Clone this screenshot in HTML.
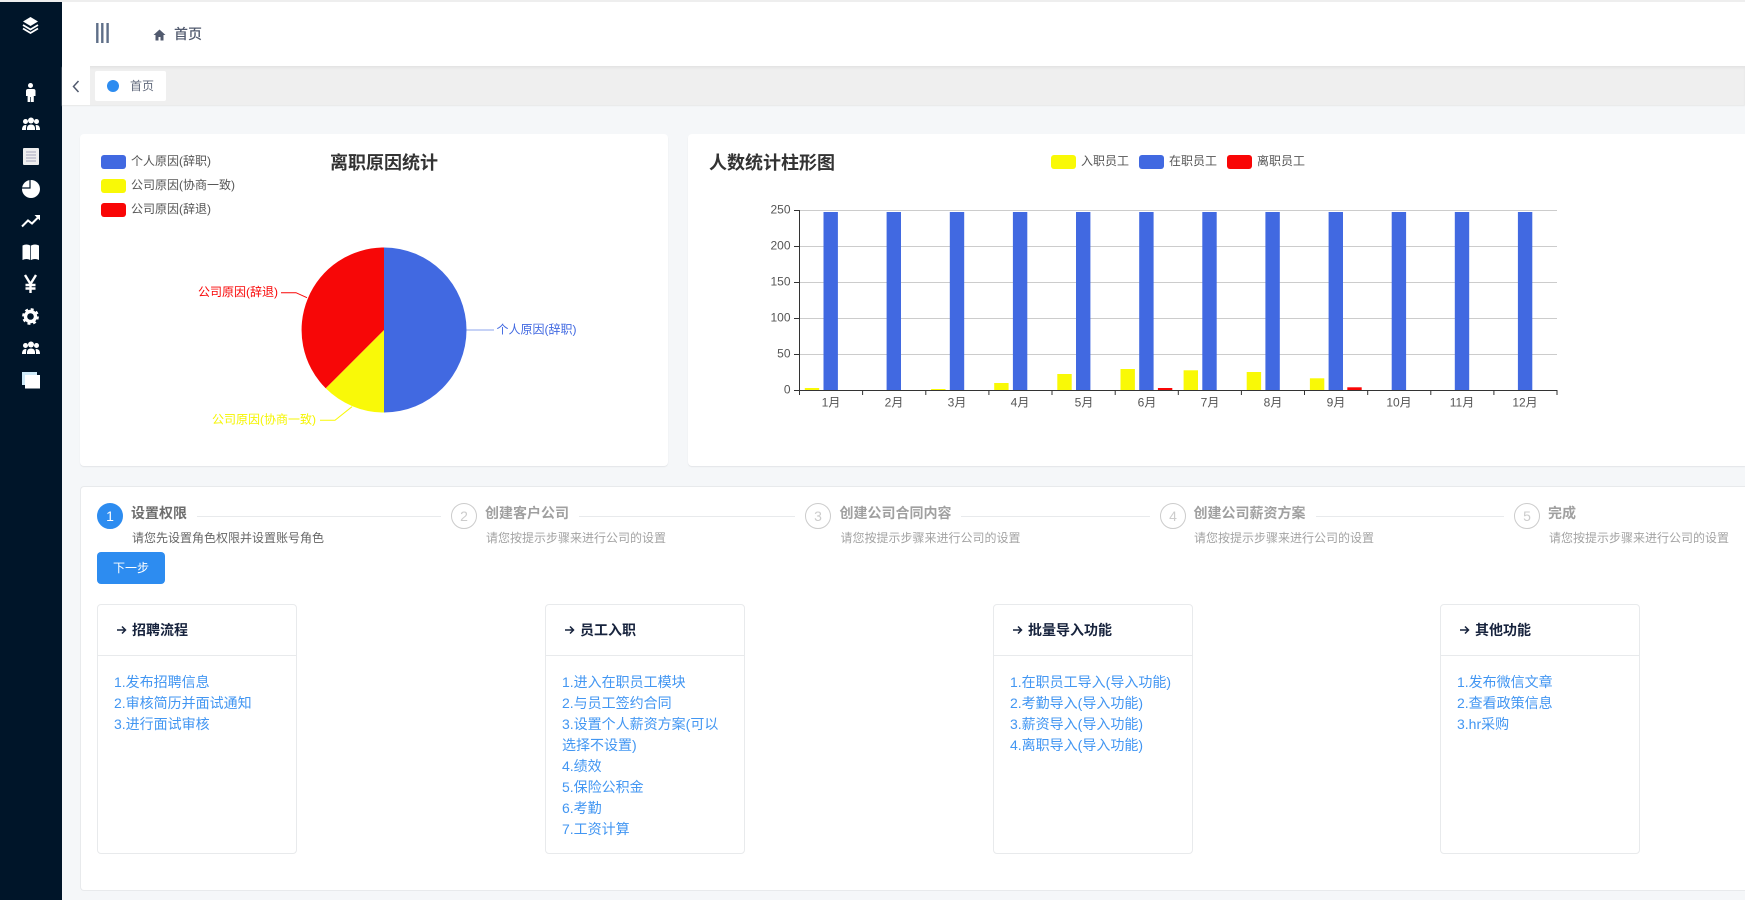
<!DOCTYPE html>
<html lang="zh-CN"><head><meta charset="utf-8"><title>首页</title>
<style>
*{box-sizing:border-box;margin:0;padding:0}
html,body{width:1745px;height:900px;overflow:hidden;background:#f5f7f9;font-family:"Liberation Sans","Noto Sans CJK SC",sans-serif;}
.a{position:absolute;white-space:nowrap}
.side{position:absolute;left:0;top:2px;width:62px;height:898px;background:#001529}
.card{position:absolute;background:#fff;border-radius:4px}
.sw{position:absolute;width:25px;height:14px;border-radius:3px}
.t12{font-size:12px;line-height:16px;color:#555}
.h18{font-size:18px;line-height:24px;font-weight:700;color:#333}
.c{position:absolute;width:26px;height:26px;border-radius:50%;border:1px solid #ccc;color:#ccc;font-size:14px;line-height:25px;text-align:center;top:503px;background:#fff}
.st{font-size:14px;line-height:20px;font-weight:700;color:#a0a0a0;top:503px}
.sd{font-size:12px;line-height:18px;color:#a3a3a3;top:529px}
.ln{position:absolute;height:1px;top:516px;background:#e8eaec}
.box{position:absolute;top:604px;width:200px;height:250px;border:1px solid #e8eaec;border-radius:4px;background:#fff}
.box .hd{position:absolute;left:0;right:0;top:0;height:51px;border-bottom:1px solid #e8eaec}
.box .tt{position:absolute;left:34px;top:14.5px;font-size:14px;line-height:20px;font-weight:700;color:#17233d;white-space:nowrap}
.box svg{position:absolute;left:18px;top:20px}
.box .bd{position:absolute;left:16px;top:67px;font-size:14px;line-height:21px;color:#4296f2;white-space:nowrap}
</style></head><body>
<div class="a" style="left:0;top:0;width:1745px;height:2px;background:#eee"></div>
<div class="side"></div>
<svg class="a" style="left:0;top:0" width="62" height="400" viewBox="0 0 62 400" fill="#fff">
<path d="M30.500 17L38 21.500L30.500 26L23 21.500Z"/>
<path d="M23 25L30.500 29.500L38 25M23 28.500L30.500 33L38 28.500" fill="none" stroke="#fff" stroke-width="1.800"/>
<circle cx="30.500" cy="85.500" r="2.500"/>
<path d="M28 89H33.500Q35.500 89 35.500 91V96H33.800V102H31V97H30.300V102H27.600V96H26V91Q26 89 28 89Z"/>
<g id="g1"><circle cx="31" cy="120.500" r="3"/><path d="M27 130Q26.500 124.500 31 124.500Q35.500 124.500 35 130Z"/><circle cx="25.500" cy="121.500" r="2.500"/><path d="M22 130Q22 125 25.500 125L26.500 125.300Q25.800 127.500 26 130Z"/><circle cx="36.500" cy="121.500" r="2.500"/><path d="M40 130Q40 125 36.500 125L35.500 125.300Q36.200 127.500 36 130Z"/></g>
<rect x="23" y="148" width="16" height="17" rx="1" fill="#eee"/>
<path d="M26 152H36M26 155H36M26 158H36M26 161H36" stroke="#b4b4c6" stroke-width="1.200"/>
<circle cx="31" cy="189" r="9"/>
<path d="M30 179.500V188H21.500" fill="none" stroke="#001529" stroke-width="1.200"/>
<path d="M22 226.500L28 220.500L32 223.500L38.500 217" fill="none" stroke="#fff" stroke-width="2"/>
<path d="M34.500 215H40V220.500Z"/>
<path d="M22.500 245.500Q26.500 243.500 30.300 245.500V260Q26.500 258 22.500 260ZM31 245.500Q35 243.500 39 245.500V260Q35 258 31 260Z"/>
<path d="M25 275L30.500 284L36 275M30.500 284V293M25.500 285H35.500M25.500 288.500H35.500" fill="none" stroke="#fff" stroke-width="2.400"/>
<circle cx="30.500" cy="316.500" r="5" fill="none" stroke="#fff" stroke-width="3.400"/>
<circle cx="30.500" cy="316.500" r="7.200" fill="none" stroke="#fff" stroke-width="2.400" stroke-dasharray="2.900 2.755"/>
<use href="#g1" y="224"/>
<rect x="22" y="372" width="15" height="13" fill="#cfeaf8"/>
<rect x="25" y="375" width="15" height="13.500"/>
</svg>

<!-- header -->
<div class="a" style="left:62px;top:2px;width:1683px;height:64px;background:#fff"></div>
<svg class="a" style="left:94px;top:20px" width="80" height="26" viewBox="94 20 80 26">
<path d="M97.300 23V43M102.300 23V43M107.600 23V43" stroke="#5f6f88" stroke-width="2.400"/>
<path d="M159.500 29.500L153.500 35H155.500V40.500H158.500V37H160.500V40.500H163.500V35H165.500Z" fill="#515a6e"/>
</svg>
<div class="a" style="left:174px;top:24px;font-size:14px;line-height:20px;color:#515a6e;font-weight:500">首页</div>

<!-- tabs -->
<div class="a" style="left:62px;top:66px;width:1683px;height:39px;background:#efefef;box-shadow:inset 0 2px 2px #e4e4e4,0 1px 1px #e8e8e8"></div>
<div class="a" style="left:62px;top:66px;width:28px;height:39px;background:#fff"></div>
<svg class="a" style="left:70px;top:78px" width="12" height="16" viewBox="0 0 12 16"><path d="M8.500 3L3.500 8.500L8.500 14" fill="none" stroke="#515a6e" stroke-width="1.500"/></svg>
<div class="a" style="left:95px;top:71px;width:71px;height:30px;background:#fff;border-radius:2px"></div>
<div class="a" style="left:107px;top:80px;width:12px;height:12px;border-radius:50%;background:#2d8cf0"></div>
<div class="a" style="left:130px;top:78px;font-size:12px;line-height:16px;color:#626a7c">首页</div>

<!-- cards -->
<div class="card" style="left:80px;top:134px;width:588px;height:332px;box-shadow:0 1px 1px #e3e5e8"></div>
<div class="card" style="left:688px;top:134px;width:1057px;height:332px;border-radius:4px 0 0 4px;box-shadow:0 1px 1px #e3e5e8"></div>

<div class="sw" style="left:101px;top:155px;background:#4169e1"></div><div class="a t12" style="left:131px;top:153px">个人原因(辞职)</div>
<div class="sw" style="left:101px;top:179px;background:#f9f906"></div><div class="a t12" style="left:131px;top:177px">公司原因(协商一致)</div>
<div class="sw" style="left:101px;top:203px;background:#f90606"></div><div class="a t12" style="left:131px;top:201px">公司原因(辞退)</div>
<div class="a h18" style="left:330px;top:151px">离职原因统计</div>

<div class="a h18" style="left:709px;top:151px">人数统计柱形图</div>
<div class="sw" style="left:1051px;top:155px;background:#f9f906"></div><div class="a t12" style="left:1081px;top:153px">入职员工</div>
<div class="sw" style="left:1139px;top:155px;background:#4169e1"></div><div class="a t12" style="left:1169px;top:153px">在职员工</div>
<div class="sw" style="left:1227px;top:155px;background:#f90606"></div><div class="a t12" style="left:1257px;top:153px">离职员工</div>

<svg class="a" style="left:0;top:0" width="1745" height="480" viewBox="0 0 1745 480" font-family="'Liberation Sans','Noto Sans CJK SC',sans-serif" font-size="12">
<!-- pie -->
<path d="M384 330V247.500A82.500 82.500 0 0 1 384 412.500Z" fill="#4169e1"/>
<path d="M384 330V412.500A82.500 82.500 0 0 1 325.700 388.300Z" fill="#f9f908"/>
<path d="M384 330L325.700 388.300A82.500 82.500 0 0 1 384 247.500Z" fill="#f70707"/>
<path d="M466.500 330H494" stroke="#4169e1" fill="none" opacity=".6"/>
<path d="M281 292.700H296L307 297.700" stroke="#f90606" fill="none"/>
<path d="M320 420.300H335L352 406.700" stroke="#f9f906" fill="none"/>
<text x="496.500" y="333.500" fill="#4169e1">个人原因(辞职)</text>
<text x="198" y="296" fill="#f90606">公司原因(辞退)</text>
<text x="212" y="423.500" fill="#f5f500">公司原因(协商一致)</text>
<!-- grid -->
<path d="M799.500 210.500H1557M799.500 246.500H1557M799.500 282.500H1557M799.500 318.500H1557M799.500 354.500H1557" stroke="#ccc" fill="none"/>
<!-- bars -->
<g fill="#4169e1" transform="translate(-0.400 0)">
<rect x="823.900" y="212" width="14.400" height="178"/><rect x="887" y="212" width="14.400" height="178"/><rect x="950.200" y="212" width="14.400" height="178"/><rect x="1013.300" y="212" width="14.400" height="178"/><rect x="1076.400" y="212" width="14.400" height="178"/><rect x="1139.600" y="212" width="14.400" height="178"/><rect x="1202.700" y="212" width="14.400" height="178"/><rect x="1265.800" y="212" width="14.400" height="178"/><rect x="1329" y="212" width="14.400" height="178"/><rect x="1392.100" y="212" width="14.400" height="178"/><rect x="1455.200" y="212" width="14.400" height="178"/><rect x="1518.300" y="212" width="14.400" height="178"/>
</g>
<g fill="#f9f906" transform="translate(-0.400 0)">
<rect x="805.200" y="388" width="14.400" height="2.300"/><rect x="931.500" y="389" width="14.400" height="1.300"/><rect x="994.600" y="383" width="14.400" height="7.300"/><rect x="1057.700" y="374" width="14.400" height="16.300"/><rect x="1120.900" y="369" width="14.400" height="21.300"/><rect x="1184" y="370.300" width="14.400" height="20"/><rect x="1247.100" y="372" width="14.400" height="18.300"/><rect x="1310.300" y="378.300" width="14.400" height="12"/>
</g>
<g fill="#f90606" transform="translate(-0.400 0)"><rect x="1158.300" y="388" width="14.400" height="2.300"/><rect x="1347.700" y="387.300" width="14.400" height="3"/></g>
<!-- axes -->
<path d="M799.500 210V395M794 210.500H799.500M794 246.500H799.500M794 282.500H799.500M794 318.500H799.500M794 354.500H799.500M794 390.500H1557.500M862.600 390V395M925.800 390V395M988.900 390V395M1052 390V395M1115.200 390V395M1178.300 390V395M1241.400 390V395M1304.500 390V395M1367.700 390V395M1430.800 390V395M1493.900 390V395M1557 390V395" stroke="#333" fill="none"/>
<g fill="#555" text-anchor="end">
<text x="790.500" y="213.500">250</text><text x="790.500" y="249.500">200</text><text x="790.500" y="285.500">150</text><text x="790.500" y="321.500">100</text><text x="790.500" y="357.500">50</text><text x="790.500" y="393.500">0</text>
</g>
<g fill="#555" text-anchor="middle">
<text x="831" y="406.500">1月</text><text x="894" y="406.500">2月</text><text x="957" y="406.500">3月</text><text x="1020" y="406.500">4月</text><text x="1084" y="406.500">5月</text><text x="1147" y="406.500">6月</text><text x="1210" y="406.500">7月</text><text x="1273" y="406.500">8月</text><text x="1336" y="406.500">9月</text><text x="1399" y="406.500">10月</text><text x="1462" y="406.500">11月</text><text x="1525" y="406.500">12月</text>
</g>
</svg>

<!-- steps card -->
<div class="card" style="left:80px;top:486px;width:1665px;height:405px;border:1px solid #e8eaec;border-right:0;border-radius:4px 0 0 4px"></div>

<div class="c" style="left:97px;background:#2d8cf0;border-color:#2d8cf0;color:#fff">1</div>
<div class="a st" style="left:131px;color:#6e6e6e">设置权限</div>
<div class="ln" style="left:197px;width:244px"></div>
<div class="a sd" style="left:132px;color:#666">请您先设置角色权限并设置账号角色</div>

<div class="c" style="left:451px">2</div>
<div class="a st" style="left:485px">创建客户公司</div>
<div class="ln" style="left:579px;width:216px"></div>
<div class="a sd" style="left:486px">请您按提示步骤来进行公司的设置</div>

<div class="c" style="left:805px">3</div>
<div class="a st" style="left:839.500px">创建公司合同内容</div>
<div class="ln" style="left:961px;width:189px"></div>
<div class="a sd" style="left:840.500px">请您按提示步骤来进行公司的设置</div>

<div class="c" style="left:1160px">4</div>
<div class="a st" style="left:1193.500px">创建公司薪资方案</div>
<div class="ln" style="left:1316px;width:188px"></div>
<div class="a sd" style="left:1194px">请您按提示步骤来进行公司的设置</div>

<div class="c" style="left:1514px">5</div>
<div class="a st" style="left:1548px">完成</div>
<div class="a sd" style="left:1549px">请您按提示步骤来进行公司的设置</div>

<div class="a" style="left:97px;top:552px;width:68px;height:32px;background:#2d8cf0;border-radius:4px;color:#fff;font-size:12px;line-height:32px;text-align:center">下一步</div>

<div class="box" style="left:97px"><div class="hd"></div>
<svg width="11" height="10" viewBox="0 0 11 10"><path d="M1 5H9.500M6 1.500L9.500 5L6 8.500" fill="none" stroke="#17233d" stroke-width="1.500"/></svg>
<div class="tt">招聘流程</div>
<div class="bd">1.发布招聘信息<br>2.审核简历并面试通知<br>3.进行面试审核</div></div>

<div class="box" style="left:545px"><div class="hd"></div>
<svg width="11" height="10" viewBox="0 0 11 10"><path d="M1 5H9.500M6 1.500L9.500 5L6 8.500" fill="none" stroke="#17233d" stroke-width="1.500"/></svg>
<div class="tt">员工入职</div>
<div class="bd">1.进入在职员工模块<br>2.与员工签约合同<br>3.设置个人薪资方案(可以<br>选择不设置)<br>4.绩效<br>5.保险公积金<br>6.考勤<br>7.工资计算</div></div>

<div class="box" style="left:993px"><div class="hd"></div>
<svg width="11" height="10" viewBox="0 0 11 10"><path d="M1 5H9.500M6 1.500L9.500 5L6 8.500" fill="none" stroke="#17233d" stroke-width="1.500"/></svg>
<div class="tt">批量导入功能</div>
<div class="bd">1.在职员工导入(导入功能)<br>2.考勤导入(导入功能)<br>3.薪资导入(导入功能)<br>4.离职导入(导入功能)</div></div>

<div class="box" style="left:1440px"><div class="hd"></div>
<svg width="11" height="10" viewBox="0 0 11 10"><path d="M1 5H9.500M6 1.500L9.500 5L6 8.500" fill="none" stroke="#17233d" stroke-width="1.500"/></svg>
<div class="tt">其他功能</div>
<div class="bd">1.发布微信文章<br>2.查看政策信息<br>3.hr采购</div></div>
</body></html>
